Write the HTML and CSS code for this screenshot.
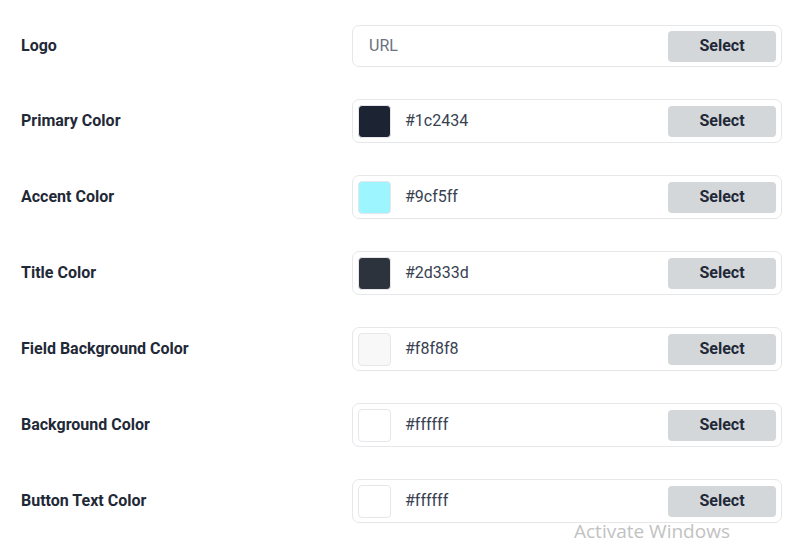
FILE: index.html
```html
<!DOCTYPE html>
<html lang="en">
<head>
<meta charset="utf-8">
<title>Branding settings</title>
<link rel="stylesheet" href="styles.css">
</head>
<body>
<div class="form">
  <div class="row">
    <label class="label">Logo</label>
    <div class="field field-url">
      <span class="placeholder">URL</span>
      <button class="select">Select</button>
    </div>
  </div>
  <div class="row">
    <label class="label">Primary Color</label>
    <div class="field">
      <span class="swatch" style="background:#1c2434"></span>
      <span class="value">#1c2434</span>
      <button class="select">Select</button>
    </div>
  </div>
  <div class="row">
    <label class="label">Accent Color</label>
    <div class="field">
      <span class="swatch" style="background:#9cf5ff"></span>
      <span class="value">#9cf5ff</span>
      <button class="select">Select</button>
    </div>
  </div>
  <div class="row">
    <label class="label">Title Color</label>
    <div class="field">
      <span class="swatch" style="background:#2d333d"></span>
      <span class="value">#2d333d</span>
      <button class="select">Select</button>
    </div>
  </div>
  <div class="row">
    <label class="label">Field Background Color</label>
    <div class="field">
      <span class="swatch" style="background:#f8f8f8"></span>
      <span class="value">#f8f8f8</span>
      <button class="select">Select</button>
    </div>
  </div>
  <div class="row">
    <label class="label">Background Color</label>
    <div class="field">
      <span class="swatch" style="background:#ffffff"></span>
      <span class="value">#ffffff</span>
      <button class="select">Select</button>
    </div>
  </div>
  <div class="row">
    <label class="label">Button Text Color</label>
    <div class="field">
      <span class="swatch" style="background:#ffffff"></span>
      <span class="value">#ffffff</span>
      <button class="select">Select</button>
    </div>
  </div>
</div>
<div class="watermark">Activate Windows</div>
</body>
</html>
```
FILE: styles.css
```css
html, body {
  margin: 0;
  background: #ffffff;
}
body {
  font-family: Roboto, "Liberation Sans", sans-serif;
  padding: 25px 6px 0 21px;
  overflow: hidden;
  height: 544px;
  box-sizing: border-box;
  position: relative;
}
.form {
  display: flex;
  flex-direction: column;
  gap: 32px;
}
.row {
  display: grid;
  grid-template-columns: 331px 1fr;
  align-items: center;
}
.label {
  font-size: 16px;
  font-weight: 700;
  color: #1f2937;
  padding-bottom: 2px;
}
.field {
  display: flex;
  align-items: center;
  border: 1px solid #e5e7eb;
  border-radius: 7px;
  padding: 5px;
  height: 32px;
}
.field-url {
  height: 30px;
}
.placeholder {
  flex: 1;
  padding-left: 11px;
  padding-bottom: 2px;
  font-size: 16px;
  color: #6b7280;
}
.swatch {
  flex: none;
  width: 33px;
  height: 33px;
  border: 1px solid #e5e7eb;
  border-radius: 4px;
  box-sizing: border-box;
}
.value {
  flex: 1;
  margin-left: 14px;
  padding-bottom: 2px;
  font-size: 16px;
  color: #374151;
}
.select {
  width: 108px;
  height: 31px;
  border: none;
  border-radius: 4px;
  background: #d4d7da;
  font-family: Roboto, "Liberation Sans", sans-serif;
  font-size: 16px;
  font-weight: 700;
  color: #1f2937;
  cursor: pointer;
  padding: 0 0 2px 0;
  margin-left: auto;
}
.watermark {
  position: absolute;
  left: 574px;
  top: 518px;
  font-family: "Open Sans", sans-serif;
  font-size: 19px;
  color: #c2c2c2;
  white-space: nowrap;
}
```
